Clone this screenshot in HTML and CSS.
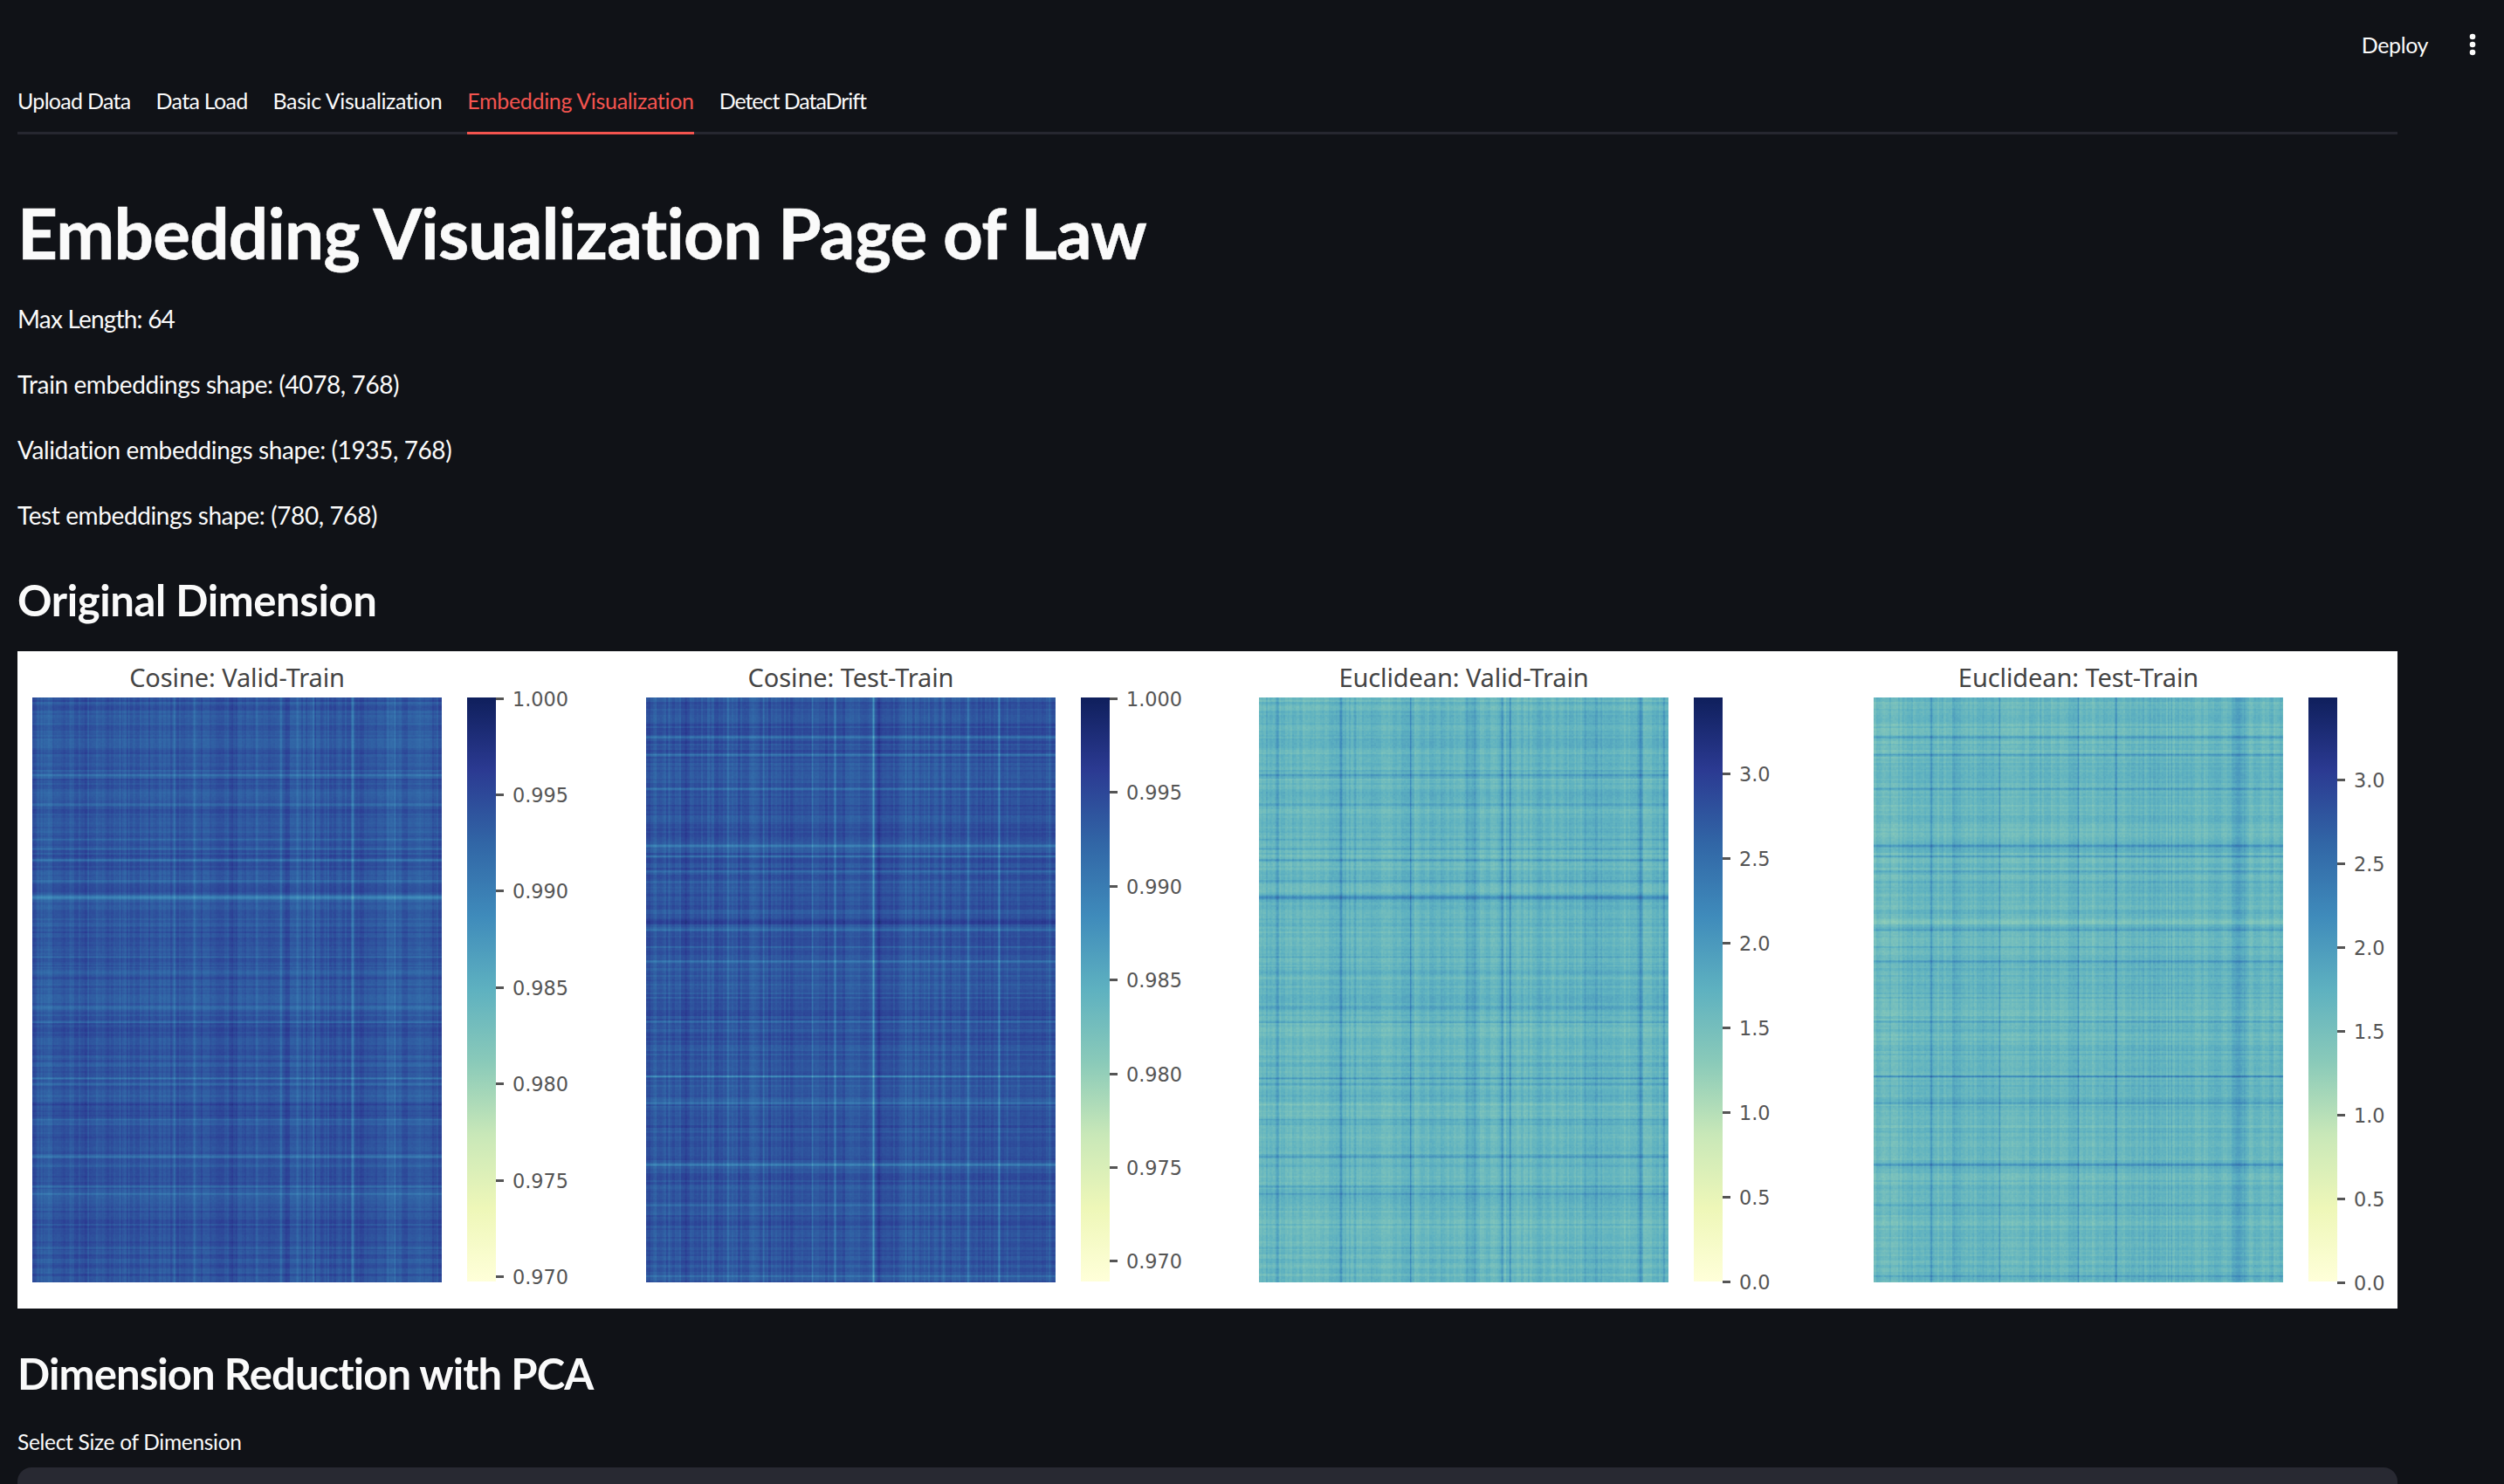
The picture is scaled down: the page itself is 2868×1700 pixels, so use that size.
FILE: index.html
```html
<!DOCTYPE html>
<html lang="en">
<head>
<meta charset="utf-8">
<title>Embedding Visualization Page of Law</title>
<link rel="stylesheet" href="styles.css">
</head>
<body>
<div class="app">
  <header class="toolbar">
    <span class="deploy">Deploy</span>
    <svg class="kebab" width="8" height="26" viewBox="0 0 8 26" aria-hidden="true"><circle cx="4" cy="4" r="3.3"/><circle cx="4" cy="13" r="3.3"/><circle cx="4" cy="22" r="3.3"/></svg>
  </header>
  <main class="main">
    <nav class="tabs">
      <span class="tab tab-tight">Upload Data</span>
      <span class="tab tab-tight">Data Load</span>
      <span class="tab">Basic Visualization</span>
      <span class="tab tab-active">Embedding Visualization</span>
      <span class="tab tab-tighter">Detect DataDrift</span>
    </nav>
    <h1 class="title">Embedding Visualization Page of Law</h1>
    <p class="line line-tight">Max Length: 64</p>
    <p class="line">Train embeddings shape: (4078, 768)</p>
    <p class="line">Validation embeddings shape: (1935, 768)</p>
    <p class="line">Test embeddings shape: (780, 768)</p>
    <h2 class="subtitle subtitle-orig">Original Dimension</h2>
    <figure class="figure">
      <section class="panel">
        <div class="panel-title">Cosine: Valid-Train</div>
        <div class="plot">
          <canvas class="heat" id="heat0" width="469" height="670"></canvas>
          <div class="cbar"></div>
          <div class="axis">
            <div class="tick" style="top:0px"><span class="dash"></span>1.000</div>
            <div class="tick" style="top:110px"><span class="dash"></span>0.995</div>
            <div class="tick" style="top:220px"><span class="dash"></span>0.990</div>
            <div class="tick" style="top:331px"><span class="dash"></span>0.985</div>
            <div class="tick" style="top:441px"><span class="dash"></span>0.980</div>
            <div class="tick" style="top:552px"><span class="dash"></span>0.975</div>
            <div class="tick" style="top:662px"><span class="dash"></span>0.970</div>
          </div>
        </div>
      </section>
      <section class="panel">
        <div class="panel-title">Cosine: Test-Train</div>
        <div class="plot">
          <canvas class="heat" id="heat1" width="469" height="670"></canvas>
          <div class="cbar"></div>
          <div class="axis">
            <div class="tick" style="top:0px"><span class="dash"></span>1.000</div>
            <div class="tick" style="top:107px"><span class="dash"></span>0.995</div>
            <div class="tick" style="top:215px"><span class="dash"></span>0.990</div>
            <div class="tick" style="top:322px"><span class="dash"></span>0.985</div>
            <div class="tick" style="top:430px"><span class="dash"></span>0.980</div>
            <div class="tick" style="top:537px"><span class="dash"></span>0.975</div>
            <div class="tick" style="top:644px"><span class="dash"></span>0.970</div>
          </div>
        </div>
      </section>
      <section class="panel panel-shift">
        <div class="panel-title">Euclidean: Valid-Train</div>
        <div class="plot">
          <canvas class="heat" id="heat2" width="469" height="670"></canvas>
          <div class="cbar"></div>
          <div class="axis">
            <div class="tick" style="top:86px"><span class="dash"></span>3.0</div>
            <div class="tick" style="top:183px"><span class="dash"></span>2.5</div>
            <div class="tick" style="top:280px"><span class="dash"></span>2.0</div>
            <div class="tick" style="top:377px"><span class="dash"></span>1.5</div>
            <div class="tick" style="top:474px"><span class="dash"></span>1.0</div>
            <div class="tick" style="top:571px"><span class="dash"></span>0.5</div>
            <div class="tick" style="top:668px"><span class="dash"></span>0.0</div>
          </div>
        </div>
      </section>
      <section class="panel">
        <div class="panel-title">Euclidean: Test-Train</div>
        <div class="plot">
          <canvas class="heat" id="heat3" width="469" height="670"></canvas>
          <div class="cbar"></div>
          <div class="axis">
            <div class="tick" style="top:93px"><span class="dash"></span>3.0</div>
            <div class="tick" style="top:189px"><span class="dash"></span>2.5</div>
            <div class="tick" style="top:285px"><span class="dash"></span>2.0</div>
            <div class="tick" style="top:381px"><span class="dash"></span>1.5</div>
            <div class="tick" style="top:477px"><span class="dash"></span>1.0</div>
            <div class="tick" style="top:573px"><span class="dash"></span>0.5</div>
            <div class="tick" style="top:669px"><span class="dash"></span>0.0</div>
          </div>
        </div>
      </section>
    </figure>
    <h2 class="subtitle subtitle-pca">Dimension Reduction with PCA</h2>
    <label class="field-label">Select Size of Dimension</label>
    <div class="select"></div>
  </main>
</div>
<script src="heatmaps.js"></script>
</body>
</html>
```
FILE: styles.css
```css
* { box-sizing: border-box; }
html, body { margin: 0; height: 1700px; overflow: hidden; }
body { background: #101217; color: #fafafa; font-family: "Lato", "Liberation Sans", sans-serif; }
.app { display: flex; flex-direction: column; height: 1700px; overflow: hidden; }

.toolbar { display: flex; justify-content: flex-end; align-items: center; gap: 47px; height: 84px; padding: 18px 32px 0 0; flex: none; }
.deploy { font-size: 25px; line-height: 36px; letter-spacing: -0.4px; }
.kebab { fill: #fafafa; display: block; }

.main { width: 2726px; margin-left: 20px; display: flex; flex-direction: column; flex: none; }

.tabs { display: flex; gap: 29px; height: 70px; border-bottom: 3px solid #262730; }
.tab { height: 70px; padding-top: 14px; font-size: 25px; line-height: 34px; letter-spacing: -0.4px; white-space: nowrap; }
.tab-tight { letter-spacing: -0.7px; }
.tab-tighter { letter-spacing: -1.05px; }
.tab-active { color: #f4544f; border-bottom: 3px solid #f4544f; letter-spacing: -0.33px; }

.title { margin: 64px 0 13px; font-size: 80px; line-height: 96px; font-weight: 700; letter-spacing: -0.76px; -webkit-text-stroke: 0.6px #fafafa; }
.line { margin: 0; height: 75px; font-size: 28px; line-height: 40px; padding-top: 18px; letter-spacing: -0.4px; }
.line-tight { letter-spacing: -0.8px; }
.subtitle { margin: 0; font-size: 49px; line-height: 64px; font-weight: 700; letter-spacing: -0.4px; }
.subtitle-orig { margin-top: 28px; }
.subtitle-pca { margin-top: 42px; letter-spacing: -0.9px; }

.figure { margin: 27px 0 0; height: 753px; background: #fff; padding: 53px 0 0 17px; display: flex; gap: 119px; filter: blur(0.4px); overflow: hidden; flex: none; }
.panel { position: relative; width: 584px; flex: none; }
.panel-shift { margin-left: -1px; margin-right: 1px; }
.panel-title { position: absolute; left: 0; top: -43px; width: 469px; text-align: center; font-family: "Noto Sans", sans-serif; font-size: 29px; line-height: 40px; letter-spacing: -0.1px; color: #444; }
.plot { display: flex; align-items: flex-start; gap: 29px; }
.heat { display: block; width: 469px; height: 670px; flex: none; }
.cbar { width: 33px; height: 669px; flex: none; background: linear-gradient(to top, #ffffd9 0%, #eef7b8 12.5%, #c9e8b8 25%, #8acab9 37.5%, #5eb1c0 50%, #3f8bbb 62.5%, #3166a6 75%, #2b3a92 87.5%, #0f1f5c 100%); }
.axis { position: relative; width: 53px; margin-left: -29px; height: 669px; flex: none; }
.tick { position: absolute; left: 0; display: flex; align-items: center; height: 28px; margin-top: -12px; font-family: "DejaVu Sans", sans-serif; font-size: 22.4px; line-height: 28px; color: #555; white-space: nowrap; }
.dash { width: 9px; height: 3px; margin-top: -2px; margin-right: 10px; background: #555; flex: none; }

.field-label { display: block; margin-top: 30px; font-size: 24.5px; line-height: 34px; letter-spacing: -0.3px; }
.select { margin-top: 12px; height: 90px; background: #282932; border-radius: 16px; flex: none; }
```
FILE: heatmaps.js
```js
// Draws the four similarity heatmaps from row/column outlier profiles.
// Line positions are given on a 1407 x 1568 grid covering the 469 x 670 plot.
(function () {
  var W = 469, H = 670, SCALE_X = 1407 / 469, SCALE_Y = 1568 / 670;
  var STOPS = [[255,255,217],[238,247,184],[201,232,184],[138,202,185],[94,177,192],[63,139,187],[49,102,166],[43,58,146],[15,31,92]];

  function rng(seed) {
    return function () {
      seed = (seed * 1664525 + 1013904223) >>> 0;
      return seed / 4294967296;
    };
  }
  function color(t) {
    t = Math.max(0, Math.min(0.999, t)) * (STOPS.length - 1);
    var i = Math.floor(t), f = t - i, a = STOPS[i], b = STOPS[i + 1];
    return [a[0] + (b[0] - a[0]) * f, a[1] + (b[1] - a[1]) * f, a[2] + (b[2] - a[2]) * f];
  }
  function profile(len, lines, seed, scale) {
    var r = rng(seed), out = new Float32Array(len), i, j;
    var coarse = [], fine = [];
    for (i = 0; i < len / 14 + 2; i++) coarse.push(r() - 0.5);
    for (i = 0; i < len / 2.5 + 2; i++) fine.push(r() - 0.5);
    for (i = 0; i < len; i++) {
      var c = i / 14, ci = Math.floor(c), cf = c - ci;
      out[i] = (coarse[ci] * (1 - cf) + coarse[ci + 1] * cf) * 0.2 + fine[Math.floor(i / 2.5)] * 0.38;
      for (j = 0; j < lines.length; j++) {
        var d = (i - lines[j][0] / scale) / lines[j][2];
        out[i] += lines[j][1] * Math.exp(-d * d);
      }
    }
    return out;
  }

  var ROWS_VALID = [[70,.3,1.2],[110,.25,1.2],[207,.6,1.2],[285,.55,1.5],[380,.45,1],[405,.5,1],[435,.65,1.4],[490,.4,1.1],[535,1.05,3],[610,.25,1.1],[695,.45,1.1],[715,.45,1],[735,.35,3.5],[830,.3,2.5],[870,.3,1.1],[1020,.6,1],[1035,.45,1],[1090,-.5,1.5],[1130,.3,1.1],[1230,.5,1.4],[1310,.65,1.5],[1330,.6,1],[1475,.45,1.2],[1530,.25,1.1]];
  var ROWS_TEST = [[105,.75,1.8],[152,.55,1.2],[245,.65,1.4],[330,.3,1.1],[398,.85,1.6],[425,.85,1.2],[465,.45,1.4],[510,.25,1.1],[600,-.5,2.5],[622,.55,1.1],[668,.5,1.1],[706,.9,1.3],[780,.25,1.1],[868,.4,1.1],[1015,1.05,1.2],[1040,.3,1.1],[1087,.65,1.3],[1165,.25,1.1],[1252,1,1.7],[1360,.4,1.4],[1550,.55,1.2]];
  var HEATS = [
    { mode: "cos", rows: ROWS_VALID, seed: 11, cols: [[30,.35,2],[130,.45,1.2],[300,.35,1.2],[330,.3,1.2],[487,.5,1.2],[555,.35,1.2],[770,.4,1.2],[853,.5,1.2],[910,.5,1.2],[965,.55,1.2],[1005,.25,1],[1100,.65,1.1],[1220,.4,1.1],[1245,.55,1.1],[690,-.3,5],[180,-.25,5],[870,-.25,4],[1160,.15,5],[225,.12,5],[60,.15,5]] },
    { mode: "cos", rows: ROWS_TEST, seed: 23, cols: [[32,.55,1.2],[78,.4,1.2],[280,.5,1.2],[370,.3,1.2],[402,.6,1],[570,.6,1.1],[648,.7,1.2],[780,1.3,1.3],[892,.4,1.2],[925,.4,1.2],[1105,.5,1.2],[1212,.95,1.2],[1385,.4,1.2],[135,-.3,2],[800,-.2,3],[1120,-.25,3],[1340,-.15,3],[1020,.2,1.2]] },
    { mode: "euc", rows: ROWS_VALID, seed: 37, cols: [[40,.3,1.2],[62,.6,2],[140,.25,1],[180,.15,2],[280,.65,2.5],[330,.5,1.3],[520,1.25,.8],[712,.35,1.3],[740,.5,2],[835,.7,1.5],[862,1,.8],[1120,.5,1.1],[1150,.25,7],[1175,.35,1],[1310,.65,1.8],[1390,.4,1.2],[1080,.2,1]] },
    { mode: "euc", rows: ROWS_TEST, seed: 53, cols: [[55,.25,1],[100,.25,1],[197,.95,1.5],[280,.3,5],[375,.25,1],[432,.55,.9],[572,.3,1],[702,.75,1],[832,.9,1],[880,.2,1],[965,.3,4],[1012,.55,.8],[1022,.55,.8],[1250,.45,5],[1272,.35,.9]] }
  ];

  HEATS.forEach(function (h, idx) {
    var ctx = document.getElementById("heat" + idx).getContext("2d");
    var img = ctx.createImageData(W, H);
    var rows = profile(H, h.rows, h.rows === ROWS_VALID ? 101 : 202, SCALE_Y);
    var cols = profile(W, h.cols, h.seed, SCALE_X);
    var r = rng(h.seed * 7), cw = Math.ceil(W / 2) + 1, noise = new Float32Array(cw * (H + 2));
    for (var n = 0; n < noise.length; n++) noise[n] = r() - 0.5;
    for (var y = 0; y < H; y++) {
      var ny = y >> 1;
      for (var x = 0; x < W; x++) {
        var cell = noise[ny * cw + (x >> 1)];
        var t = h.mode === "cos"
          ? 0.795 - 0.15 * (rows[y] + cols[x]) + 0.012 * cell
          : 0.48 + 0.15 * (rows[y] + cols[x]) + 0.024 * cell;
        var c = color(t), p = (y * W + x) * 4;
        img.data[p] = c[0]; img.data[p + 1] = c[1]; img.data[p + 2] = c[2]; img.data[p + 3] = 255;
      }
    }
    ctx.putImageData(img, 0, 0);
  });
})();
```
